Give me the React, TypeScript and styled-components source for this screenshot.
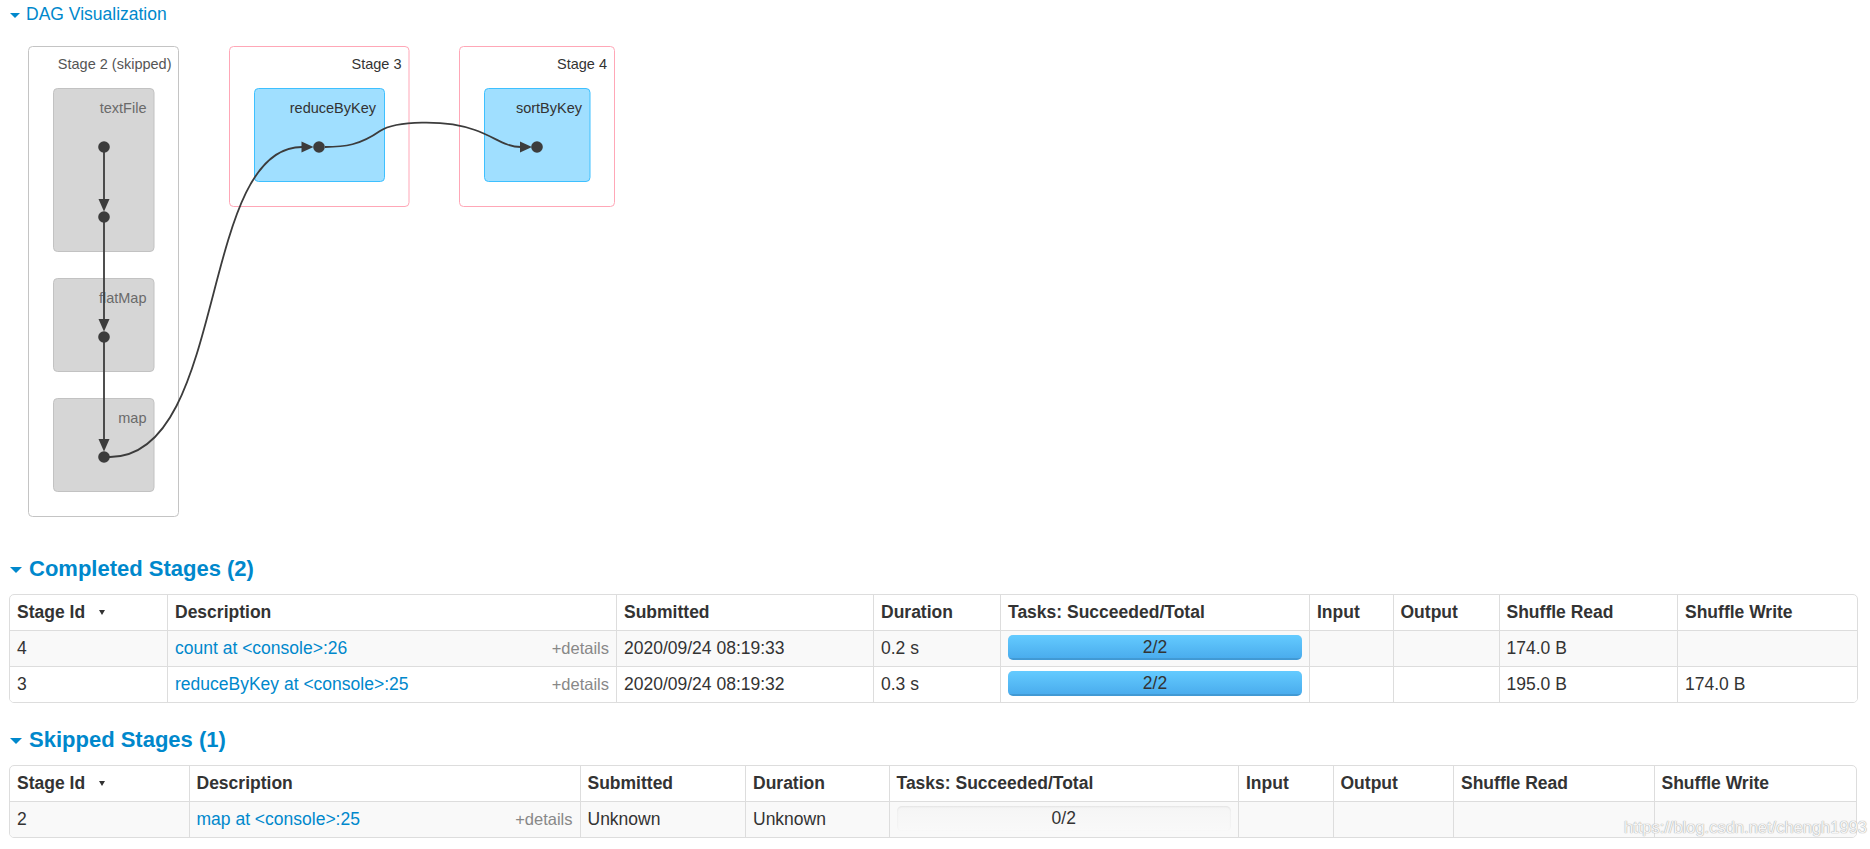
import styled, { createGlobalStyle } from 'styled-components';

const GlobalStyle = createGlobalStyle`
  html, body {
    margin: 0;
    padding: 0;
    background: #ffffff;
  }

  body {
    font-family: "Liberation Sans", Arial, Helvetica, sans-serif;
    font-size: 17.5px;
    color: #333333;
  }
`;

const Page = styled.div`
  position: relative;
  box-sizing: border-box;
  width: 1870px;
  height: 849px;
  padding: 0 13px 0 9px;
  overflow: hidden;
`;

const DagToggle = styled.div`
  display: flex;
  align-items: center;
  padding-top: 4px;
  height: 20px;
  line-height: 20px;
  font-size: 17.5px;
  color: #0088cc;
  cursor: pointer;
`;

const Caret = styled.span<{ $size: number; $gap: number }>`
  display: inline-block;
  width: 0;
  height: 0;
  margin: 2px ${(p) => p.$gap}px 0 1px;
  border-left: ${(p) => p.$size}px solid transparent;
  border-right: ${(p) => p.$size}px solid transparent;
  border-top: ${(p) => p.$size}px solid #0088cc;
`;

const DagSvg = styled.svg`
  display: block;
  margin-top: 6px;
  font-family: "Liberation Sans", Arial, sans-serif;
  font-size: 14.5px;
`;

const SectionTitle = styled.h4<{ $top: number }>`
  display: flex;
  align-items: center;
  margin: ${(p) => p.$top}px 0 0;
  height: 26px;
  line-height: 26px;
  font-size: 22px;
  font-weight: bold;
  color: #0088cc;
  cursor: pointer;
`;

const StageTable = styled.table`
  width: 1848px;
  margin-top: 12px;
  table-layout: fixed;
  border-collapse: separate;
  border-spacing: 0;
  border: 1px solid #dddddd;
  border-radius: 5px;

  tbody tr:last-child td:first-child {
    border-bottom-left-radius: 4px;
  }

  tbody tr:last-child td:last-child {
    border-bottom-right-radius: 4px;
  }
`;

const Col = styled.col<{ $w: number }>`
  width: ${(p) => p.$w}px;
`;

const HeadCell = styled.th`
  padding: 7px;
  line-height: 21px;
  text-align: left;
  font-weight: bold;
  color: #333333;
  white-space: nowrap;
  overflow: hidden;
  border-left: 1px solid #dddddd;

  &:first-child {
    border-left: 0;
  }
`;

const SortArrow = styled.span`
  display: inline-block;
  width: 0;
  height: 0;
  margin: 0 0 2px 14px;
  vertical-align: middle;
  border-left: 3.5px solid transparent;
  border-right: 3.5px solid transparent;
  border-top: 5px solid #333333;
`;

const Row = styled.tr<{ $striped: boolean }>`
  background: ${(p) => (p.$striped ? '#f9f9f9' : '#ffffff')};
`;

const Cell = styled.td<{ $bar?: boolean }>`
  padding: ${(p) => (p.$bar ? '4px 7px 6px' : '7px')};
  line-height: 21px;
  white-space: nowrap;
  overflow: hidden;
  vertical-align: middle;
  border-left: 1px solid #dddddd;
  border-top: 1px solid #dddddd;

  &:first-child {
    border-left: 0;
  }
`;

const Description = styled.div`
  display: flex;
  justify-content: space-between;
  align-items: baseline;
`;

const StageLink = styled.a`
  color: #0088cc;
  text-decoration: none;
`;

const Details = styled.span`
  font-size: 16.5px;
  color: #888888;
  cursor: pointer;
`;

const Progress = styled.div`
  position: relative;
  height: 25px;
  border-radius: 5px;
  overflow: hidden;
  background: linear-gradient(#f5f5f5, #f9f9f9);
  box-shadow: inset 0 1px 2px rgba(0, 0, 0, 0.08);
`;

const ProgressFill = styled.div`
  height: 100%;
  background: linear-gradient(#64cbff, #48aaec);
  box-shadow: inset 0 -2px 0 rgba(0, 0, 0, 0.1);
`;

const ProgressText = styled.span`
  position: absolute;
  inset: 0;
  line-height: 25px;
  text-align: center;
  color: #333333;
`;

const Watermark = styled.div`
  position: absolute;
  right: 3px;
  top: 818px;
  font-size: 16.5px;
  color: #f6f6f6;
  text-shadow: 0 0 1px #a8a8a8, 0 0 1px #a8a8a8;
  pointer-events: none;
`;

interface Stage {
  id: number;
  description: string;
  submitted: string;
  duration: string;
  succeeded: number;
  total: number;
  shuffleRead: string;
  shuffleWrite: string;
}

const headers = [
  'Stage Id',
  'Description',
  'Submitted',
  'Duration',
  'Tasks: Succeeded/Total',
  'Input',
  'Output',
  'Shuffle Read',
  'Shuffle Write',
];

const completedStages: Stage[] = [
  {
    id: 4,
    description: 'count at <console>:26',
    submitted: '2020/09/24 08:19:33',
    duration: '0.2 s',
    succeeded: 2,
    total: 2,
    shuffleRead: '174.0 B',
    shuffleWrite: '',
  },
  {
    id: 3,
    description: 'reduceByKey at <console>:25',
    submitted: '2020/09/24 08:19:32',
    duration: '0.3 s',
    succeeded: 2,
    total: 2,
    shuffleRead: '195.0 B',
    shuffleWrite: '174.0 B',
  },
];

const skippedStages: Stage[] = [
  {
    id: 2,
    description: 'map at <console>:25',
    submitted: 'Unknown',
    duration: 'Unknown',
    succeeded: 0,
    total: 2,
    shuffleRead: '',
    shuffleWrite: '',
  },
];

const StagesTable = ({ stages, widths }: { stages: Stage[]; widths: number[] }) => (
  <StageTable>
    <colgroup>
      {widths.map((w, i) => (
        <Col key={i} $w={w} />
      ))}
    </colgroup>
    <thead>
      <tr>
        {headers.map((h, i) => (
          <HeadCell key={h}>
            {h}
            {i === 0 && <SortArrow />}
          </HeadCell>
        ))}
      </tr>
    </thead>
    <tbody>
      {stages.map((s, i) => (
        <Row key={s.id} $striped={i % 2 === 0}>
          <Cell>{s.id}</Cell>
          <Cell>
            <Description>
              <StageLink href="#">{s.description}</StageLink>
              <Details>+details</Details>
            </Description>
          </Cell>
          <Cell>{s.submitted}</Cell>
          <Cell>{s.duration}</Cell>
          <Cell $bar>
            <Progress>
              <ProgressFill style={{ width: `${(s.succeeded / s.total) * 100}%` }} />
              <ProgressText>
                {s.succeeded}/{s.total}
              </ProgressText>
            </Progress>
          </Cell>
          <Cell />
          <Cell />
          <Cell>{s.shuffleRead}</Cell>
          <Cell>{s.shuffleWrite}</Cell>
        </Row>
      ))}
    </tbody>
  </StageTable>
);

// DAG drawing, coordinates are page pixels (shifted by the group transform)
const DagGraph = () => (
  <DagSvg width={620} height={526}>
    <g transform="translate(-9,-30)">
      {/* stage clusters */}
      <rect x={28.5} y={46.5} width={150} height={470} rx={4} fill="#ffffff" stroke="#c4c4c4" />
      <text x={171.5} y={69} textAnchor="end" fill="#555555">Stage 2 (skipped)</text>
      <rect x={229.5} y={46.5} width={179.5} height={160} rx={4} fill="#ffffff" stroke="#ffa7b7" />
      <text x={401.5} y={69} textAnchor="end" fill="#333333">Stage 3</text>
      <rect x={459.5} y={46.5} width={155} height={160} rx={4} fill="#ffffff" stroke="#ffa7b7" />
      <text x={607} y={69} textAnchor="end" fill="#333333">Stage 4</text>

      {/* rdd nodes */}
      <rect x={53.5} y={88.5} width={100.5} height={163} rx={4} fill="#d6d6d6" stroke="#c2c2c2" />
      <text x={146.5} y={112.5} textAnchor="end" fill="#6a6a6a">textFile</text>
      <rect x={53.5} y={278.5} width={100.5} height={93} rx={4} fill="#d6d6d6" stroke="#c2c2c2" />
      <text x={146.5} y={302.5} textAnchor="end" fill="#6a6a6a">flatMap</text>
      <rect x={53.5} y={398.5} width={100.5} height={93} rx={4} fill="#d6d6d6" stroke="#c2c2c2" />
      <text x={146.5} y={422.5} textAnchor="end" fill="#6a6a6a">map</text>
      <rect x={254.5} y={88.5} width={130} height={93} rx={4} fill="#a0dfff" stroke="#3ec0ff" />
      <text x={376} y={112.5} textAnchor="end" fill="#333333">reduceByKey</text>
      <rect x={484.5} y={88.5} width={105.5} height={93} rx={4} fill="#a0dfff" stroke="#3ec0ff" />
      <text x={582} y={112.5} textAnchor="end" fill="#333333">sortByKey</text>

      {/* edges */}
      <g fill="none" stroke="#3c3c3c" strokeWidth={1.8}>
        <path d="M104,147 L104,200" />
        <path d="M104,217 L104,320" />
        <path d="M104,337 L104,440" />
        <path d="M104,457 L110,457 C228,457 198,147 302,147" />
        <path d="M325,147 C345,147 360,145 380,131 C395,121 445,119 475,130 C495,137 505,147 521,147" />
      </g>
      <g fill="#3c3c3c">
        <polygon points="98.5,199 109.5,199 104,211.5" />
        <polygon points="98.5,319 109.5,319 104,331.5" />
        <polygon points="98.5,439 109.5,439 104,451.5" />
        <polygon points="301.5,141.5 301.5,152.5 313.5,147" />
        <polygon points="520,141.5 520,152.5 532,147" />
        <circle cx={104} cy={147} r={5.8} />
        <circle cx={104} cy={217} r={5.8} />
        <circle cx={104} cy={337} r={5.8} />
        <circle cx={104} cy={457} r={5.8} />
        <circle cx={319} cy={147} r={5.8} />
        <circle cx={537} cy={147} r={5.8} />
      </g>
    </g>
  </DagSvg>
);

export default function App() {
  return (
    <Page>
      <GlobalStyle />
      <DagToggle>
        <Caret $size={5} $gap={6} />
        DAG Visualization
      </DagToggle>
      <DagGraph />

      <SectionTitle $top={0}>
        <Caret $size={6} $gap={7} />
        Completed Stages (2)
      </SectionTitle>
      <StagesTable stages={completedStages} widths={[157, 449, 257, 127, 309, 83.5, 106, 178.5, 179.5]} />

      <SectionTitle $top={24}>
        <Caret $size={6} $gap={7} />
        Skipped Stages (1)
      </SectionTitle>
      <StagesTable stages={skippedStages} widths={[178.5, 391, 165.5, 143.5, 349.5, 94.5, 120.5, 200.5, 202.5]} />

      <Watermark>https://blog.csdn.net/chengh1993</Watermark>
    </Page>
  );
}
